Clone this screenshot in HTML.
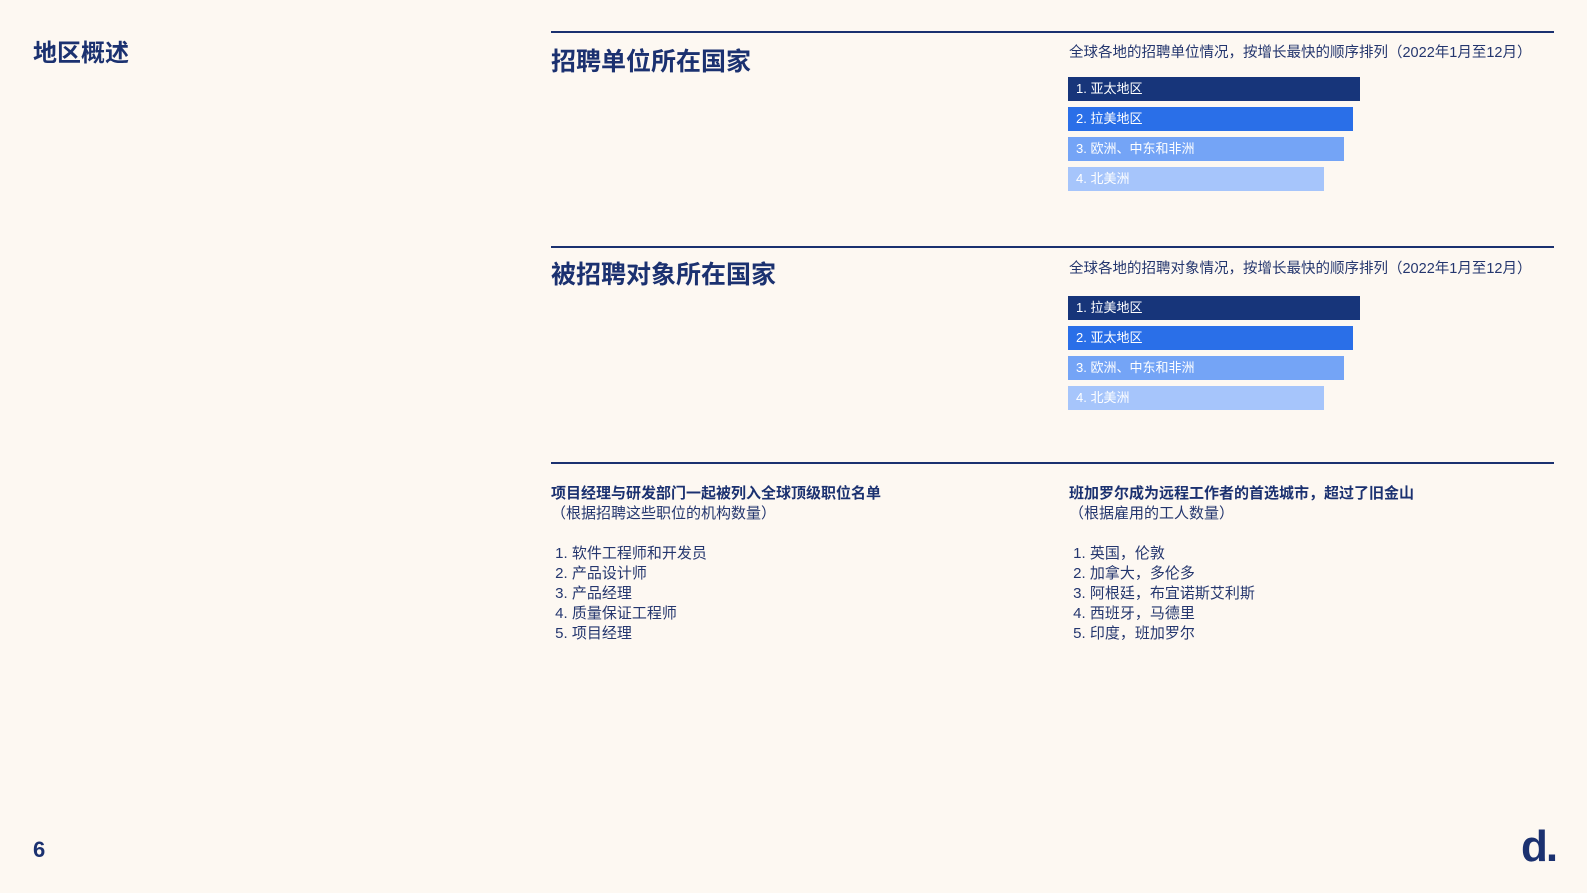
<!DOCTYPE html>
<html><head><meta charset="utf-8"><style>
body{margin:0;width:1587px;height:893px;background:#fdf8f2;position:relative;overflow:hidden;font-family:"Liberation Sans","Noto Sans CJK SC",sans-serif;color:#1b3170}
.a{position:absolute;white-space:nowrap}
.line{position:absolute;left:551px;width:1003px;height:1.5px;background:#1b3170}
.h{font-size:25px;font-weight:bold}
.sub{font-size:14.5px;color:#24366e}
.bar{position:absolute;left:1068px;height:24px;color:#fff;font-size:13px;line-height:24px;padding-left:8px;box-sizing:border-box}
.t{font-size:15px;line-height:20px;color:#24366e}
</style></head><body>
<div class="a" style="left:33px;top:33px;font-size:24px;font-weight:bold">地区概述</div>
<div class="line" style="top:31px"></div>
<div class="a h" style="left:551px;top:42px">招聘单位所在国家</div>
<div class="a sub" style="left:1069px;top:41px">全球各地的招聘单位情况，按增长最快的顺序排列（2022年1月至12月）</div>
<div class="bar" style="top:77px;width:292px;background:#17357a">1. 亚太地区</div>
<div class="bar" style="top:107px;width:285px;background:#2a6fe8">2. 拉美地区</div>
<div class="bar" style="top:137px;width:276px;background:#74a4f6">3. 欧洲、中东和非洲</div>
<div class="bar" style="top:167px;width:256px;background:#a6c5fb">4. 北美洲</div>

<div class="line" style="top:246px"></div>
<div class="a h" style="left:551px;top:255px">被招聘对象所在国家</div>
<div class="a sub" style="left:1069px;top:257px">全球各地的招聘对象情况，按增长最快的顺序排列（2022年1月至12月）</div>
<div class="bar" style="top:296px;width:292px;background:#17357a">1. 拉美地区</div>
<div class="bar" style="top:326px;width:285px;background:#2a6fe8">2. 亚太地区</div>
<div class="bar" style="top:356px;width:276px;background:#74a4f6">3. 欧洲、中东和非洲</div>
<div class="bar" style="top:386px;width:256px;background:#a6c5fb">4. 北美洲</div>

<div class="line" style="top:462px"></div>
<div class="a t" style="left:551px;top:484px"><b style="color:#1b3170">项目经理与研发部门一起被列入全球顶级职位名单</b><br>（根据招聘这些职位的机构数量）<br><br>&nbsp;1. 软件工程师和开发员<br>&nbsp;2. 产品设计师<br>&nbsp;3. 产品经理<br>&nbsp;4. 质量保证工程师<br>&nbsp;5. 项目经理</div>
<div class="a t" style="left:1069px;top:484px"><b style="color:#1b3170">班加罗尔成为远程工作者的首选城市，超过了旧金山</b><br>（根据雇用的工人数量）<br><br>&nbsp;1. 英国，伦敦<br>&nbsp;2. 加拿大，多伦多<br>&nbsp;3. 阿根廷，布宜诺斯艾利斯<br>&nbsp;4. 西班牙，马德里<br>&nbsp;5. 印度，班加罗尔</div>

<div class="a" style="left:33px;top:837px;font-size:22px;font-weight:bold">6</div>
<div class="a" style="left:1521px;top:822px;font-size:44px;font-weight:bold;letter-spacing:-2px;color:#1b3170">d.</div>
</body></html>
